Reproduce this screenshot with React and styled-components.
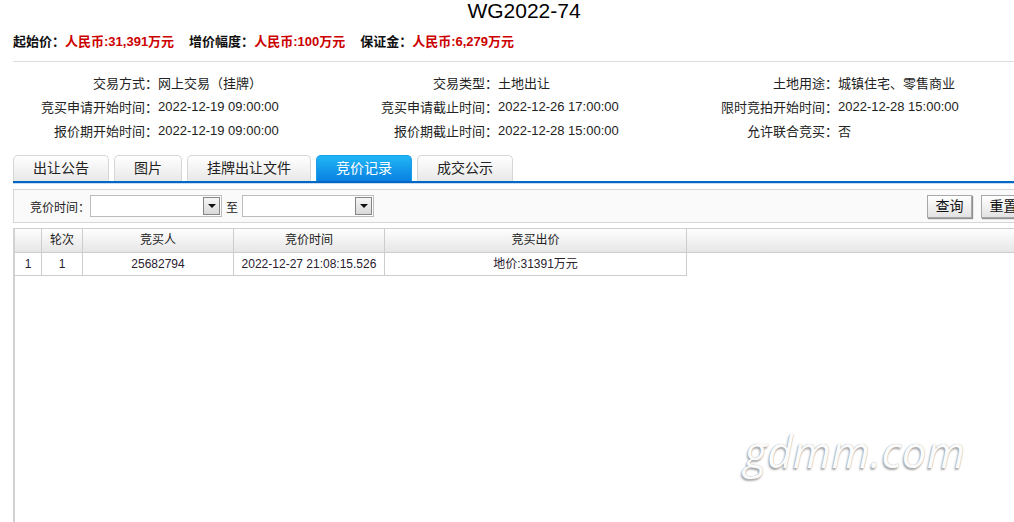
import React from "react";
import styled, { createGlobalStyle } from "styled-components";

const FONT = '"Liberation Sans", "Noto Sans CJK SC", sans-serif';

const GlobalStyle = createGlobalStyle`
  html, body {
    margin: 0;
    padding: 0;
    overflow: hidden;
    background: #fff;
    font-family: ${FONT};
    color: #222;
  }
  * { box-sizing: border-box; }
`;

const Page = styled.div`
  position: relative;
  width: 1035px;
  height: 522px;
  padding-left: 13px;
  display: flex;
  flex-direction: column;
`;

const Title = styled.div`
  text-align: center;
  font-size: 21px;
  line-height: 22px;
  color: #000;
`;

const PriceLine = styled.div`
  display: flex;
  margin-top: 10px;
  line-height: 20px;
  font-size: 13px;
  font-weight: bold;
  gap: 15px;
`;

const PriceItem = styled.span`
  color: #111;
`;

const PriceValue = styled.span`
  color: #cc0000;
`;

const Rule = styled.div`
  margin-top: 9px;
  height: 1px;
  background: #dcdcdc;
`;

const InfoGrid = styled.div`
  display: grid;
  grid-template-columns: 145px 195px 145px 195px 145px 1fr;
  grid-auto-rows: 24px;
  padding-top: 8px;
  font-size: 13px;
  color: #222;
  align-items: center;
`;

const InfoLabel = styled.div`
  text-align: right;
  white-space: nowrap;
`;

const InfoValue = styled.div`
  white-space: nowrap;
`;

const TabBar = styled.div`
  display: flex;
  gap: 5px;
  margin-top: 13px;
  border-bottom: 2px solid #0567c4;
  box-shadow: 0 1px 0 #c8dcef;
`;

const Tab = styled.div`
  height: 26px;
  padding: 0 19px;
  border: 1px solid ${(p) => (p.$active ? "#1a9ee8" : "#d6d6d6")};
  border-bottom: none;
  border-radius: 5px 5px 0 0;
  font-size: 14px;
  line-height: 25px;
  white-space: nowrap;
  color: ${(p) => (p.$active ? "#fff" : "#222")};
  background: ${(p) =>
    p.$active
      ? "linear-gradient(#1fb6f5, #0a80e2)"
      : "linear-gradient(#ffffff, #e8e8e8)"};
`;

const FilterBar = styled.div`
  margin-top: 6px;
  height: 34px;
  border: 1px solid #d6d6d6;
  background: #fafafa;
  display: flex;
  align-items: center;
  padding: 0 8px 0 16px;
  font-size: 12px;
`;

const FilterLabel = styled.span`
  white-space: nowrap;
`;

const Joiner = styled.span`
  margin: 0 4px;
`;

const Select = styled.div`
  position: relative;
  width: 132px;
  height: 22px;
  border: 1px solid #bdbdbd;
  background: #fff;
`;

const SelectArrow = styled.div`
  position: absolute;
  right: 1px;
  top: 1px;
  width: 17px;
  height: 18px;
  border: 1px solid #858585;
  background: linear-gradient(#f6f6f6, #d9d9d9);
  display: flex;
  align-items: center;
  justify-content: center;
  &::after {
    content: "";
    border-left: 4px solid transparent;
    border-right: 4px solid transparent;
    border-top: 4px solid #111;
  }
`;

const Buttons = styled.div`
  margin-left: auto;
  display: flex;
  gap: 9px;
`;

const Button = styled.div`
  width: 45px;
  height: 23px;
  border: 1px solid #a8a8a8;
  box-shadow: 1px 1px 1px #909090;
  background: linear-gradient(#ffffff, #e2e2e2);
  font-size: 14px;
  line-height: 21px;
  text-align: center;
  color: #111;
`;

const GridPanel = styled.div`
  margin-top: 5px;
  flex: 1;
  border-top: 1px solid #cfcfcf;
  border-left: 2px solid #d2d2d2;
`;

const COLS = "27px 41px 151px 151px 302px";

const HeaderRow = styled.div`
  display: grid;
  grid-template-columns: ${COLS} 1fr;
  height: 24px;
`;

const HeadCell = styled.div`
  border-right: ${(p) => (p.$filler ? "none" : "1px solid #cdcdcd")};
  border-bottom: 1px solid #cdcdcd;
  background: linear-gradient(#fefefe, #e6e6e6);
  font-size: 12px;
  line-height: 23px;
  text-align: center;
  color: #222;
`;

const DataRow = styled.div`
  display: grid;
  grid-template-columns: ${COLS};
  width: max-content;
  height: 23px;
`;

const DataCell = styled.div`
  border-right: 1px solid #cdcdcd;
  border-bottom: 1px solid #cdcdcd;
  font-size: 12px;
  line-height: 22px;
  text-align: center;
  color: #2a2030;
  white-space: nowrap;
`;

const Watermark = styled.div`
  position: absolute;
  left: 744px;
  top: 421px;
  font-family: "Open Sans", "Noto Sans", sans-serif;
  font-style: italic;
  font-weight: 400;
  font-size: 44px;
  line-height: 60px;
  color: #fbfbfb;
  letter-spacing: 0.3px;
  text-shadow: 0 0 1px #9a9a9a, -1px 2px 2px rgba(0, 0, 0, 0.35);
  pointer-events: none;
`;

const info = [
  ["交易方式：", "网上交易（挂牌）", "交易类型：", "土地出让", "土地用途：", "城镇住宅、零售商业"],
  ["竞买申请开始时间：", "2022-12-19 09:00:00", "竞买申请截止时间：", "2022-12-26 17:00:00", "限时竞拍开始时间：", "2022-12-28 15:00:00"],
  ["报价期开始时间：", "2022-12-19 09:00:00", "报价期截止时间：", "2022-12-28 15:00:00", "允许联合竞买：", "否"],
];

const tabs = ["出让公告", "图片", "挂牌出让文件", "竞价记录", "成交公示"];

export default function App() {
  return (
    <>
      <GlobalStyle />
      <Page>
        <Title>WG2022-74</Title>
        <PriceLine>
          <PriceItem>
            起始价：<PriceValue>人民币:31,391万元</PriceValue>
          </PriceItem>
          <PriceItem>
            增价幅度：<PriceValue>人民币:100万元</PriceValue>
          </PriceItem>
          <PriceItem>
            保证金：<PriceValue>人民币:6,279万元</PriceValue>
          </PriceItem>
        </PriceLine>
        <Rule />
        <InfoGrid>
          {info.map((row, i) =>
            row.map((t, j) =>
              j % 2 === 0 ? (
                <InfoLabel key={`${i}-${j}`}>{t}</InfoLabel>
              ) : (
                <InfoValue key={`${i}-${j}`}>{t}</InfoValue>
              )
            )
          )}
        </InfoGrid>
        <TabBar>
          {tabs.map((t) => (
            <Tab key={t} $active={t === "竞价记录"}>
              {t}
            </Tab>
          ))}
        </TabBar>
        <FilterBar>
          <FilterLabel>竞价时间：</FilterLabel>
          <Select>
            <SelectArrow />
          </Select>
          <Joiner>至</Joiner>
          <Select>
            <SelectArrow />
          </Select>
          <Buttons>
            <Button>查询</Button>
            <Button>重置</Button>
          </Buttons>
        </FilterBar>
        <GridPanel>
          <HeaderRow>
            <HeadCell />
            <HeadCell>轮次</HeadCell>
            <HeadCell>竞买人</HeadCell>
            <HeadCell>竞价时间</HeadCell>
            <HeadCell>竞买出价</HeadCell>
            <HeadCell $filler />
          </HeaderRow>
          <DataRow>
            <DataCell>1</DataCell>
            <DataCell>1</DataCell>
            <DataCell>25682794</DataCell>
            <DataCell>2022-12-27 21:08:15.526</DataCell>
            <DataCell>地价:31391万元</DataCell>
          </DataRow>
        </GridPanel>
        <Watermark>gdmm.com</Watermark>
      </Page>
    </>
  );
}
